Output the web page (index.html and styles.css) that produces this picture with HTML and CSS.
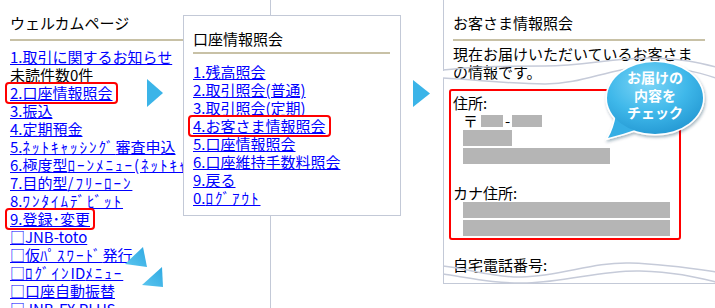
FILE: index.html
```html
<!DOCTYPE html>
<html lang="ja">
<head>
    <meta charset="UTF-8">
    <meta name="viewport" content="width=device-width, initial-scale=1.0">
    <title>お客さま情報照会の手順</title>
    <link rel="stylesheet" href="styles.css">
</head>
<body>
    <div class="stage">
        <div class="panel panel-welcome">
            <div class="panel-title">ウェルカムページ</div>
            <div class="rule"></div>
            <ul class="menu">
                <li><a href="#">1.取引に関するお知らせ</a></li>
                <li>未読件数0件</li>
                <li><a class="mark" href="#">2.口座情報照会</a></li>
                <li><a href="#">3.振込</a></li>
                <li><a href="#">4.定期預金</a></li>
                <li><a href="#">5.<span class="hw">ﾈｯﾄｷｬｯｼﾝｸﾞ</span>審査申込</a></li>
                <li><a href="#">6.極度型<span class="hw">ﾛｰﾝﾒﾆｭｰ(ﾈｯﾄｷｬｯｼﾝｸﾞ)</span></a></li>
                <li><a href="#">7.目的型<span class="hw">/ﾌﾘｰﾛｰﾝ</span></a></li>
                <li><a href="#">8.<span class="hw">ﾜﾝﾀｲﾑﾃﾞﾋﾞｯﾄ</span></a></li>
                <li><a class="mark" href="#">9.登録･変更</a></li>
                <li><a href="#">□JNB-toto</a></li>
                <li><a href="#">□仮<span class="hw">ﾊﾟｽﾜｰﾄﾞ</span>発行</a></li>
                <li><a href="#">□<span class="hw">ﾛｸﾞｲﾝ</span>ID<span class="hw">ﾒﾆｭｰ</span></a></li>
                <li><a href="#">□口座自動振替</a></li>
                <li><a href="#">□JNB-FX PLUS</a></li>
            </ul>
        </div>

        <div class="panel panel-account">
            <div class="panel-title">口座情報照会</div>
            <div class="rule"></div>
            <ul class="menu">
                <li><a href="#">1.残高照会</a></li>
                <li><a href="#">2.取引照会(普通)</a></li>
                <li><a href="#">3.取引照会(定期)</a></li>
                <li><a class="mark" href="#">4.お客さま情報照会</a></li>
                <li><a href="#">5.口座情報照会</a></li>
                <li><a href="#">6.口座維持手数料照会</a></li>
                <li><a href="#">9.戻る</a></li>
                <li><a href="#">0.<span class="hw">ﾛｸﾞｱｳﾄ</span></a></li>
            </ul>
        </div>

        <div class="panel panel-customer">
            <div class="panel-title">お客さま情報照会</div>
            <div class="rule"></div>
            <p class="lead">現在お届けいただいているお客さまの情報です。</p>
            <div class="address-box">
                <div class="label">住所:</div>
                <div class="zip">〒<span class="mask w22"></span><span class="dash">-</span><span class="mask w30"></span></div>
                <div class="mask-bar w49"></div>
                <div class="mask-bar w147"></div>
                <div class="label kana">カナ住所:</div>
                <div class="mask-bar w207"></div>
                <div class="mask-bar w207"></div>
            </div>
            <div class="label phone">自宅電話番号:</div>
        </div>

        <!-- arrows and torn edges drawn over the panels -->
        <svg class="decor" width="715" height="308" viewBox="0 0 715 308">
            <defs>
                <linearGradient id="triFill" x1="0" y1="1" x2="1" y2="0">
                    <stop offset="0" stop-color="#5cc6ef"/>
                    <stop offset="1" stop-color="#2fa9e2"/>
                </linearGradient>
            </defs>
            <polygon points="147,79 163,93 147,107" fill="#3bb4e8"/>
            <polygon points="413,80 430,93.5 413,107" fill="#3bb4e8"/>
            <polygon points="143,247 147,267 125,264" fill="url(#triFill)"/>
            <polygon points="162,267 163,287 142,285" fill="url(#triFill)"/>

            <rect x="442" y="71" width="3" height="7" fill="#fff"/>
            <path class="wave" d="M443,70 C480,66 510,66 545,66 C585,66 610,58 650,58 C680,58 700,63 716,67"/>
            <path class="wave" d="M443,78 C480,80 510,84 545,84 C585,84 610,67 650,67 C680,67 700,73 716,78"/>

            <path class="wave" d="M443,266 C470,269 495,278 522,277 C562,276 592,262 630,263 C665,264 690,268 716,272"/>
            <path class="wave" d="M443,274 C470,278 497,284 527,283 C567,282 602,270 640,271 C675,272 695,277 716,282"/>
        </svg>

        <div class="bubble">
            <svg class="bubble-shape" width="110" height="90" viewBox="0 0 110 90">
                <defs>
                    <radialGradient id="bubbleFill" cx="0.42" cy="0.3" r="0.75">
                        <stop offset="0" stop-color="#7dd5f6"/>
                        <stop offset="0.55" stop-color="#3fb8ea"/>
                        <stop offset="1" stop-color="#2397d2"/>
                    </radialGradient>
                    <filter id="bubbleShadow" x="-20%" y="-20%" width="140%" height="140%">
                        <feDropShadow dx="1" dy="2" stdDeviation="1.5" flood-color="#0a3550" flood-opacity="0.35"/>
                    </filter>
                </defs>
                <g filter="url(#bubbleShadow)">
                    <path d="M16,56 Q14,70 8,80 Q24,76 38,71 Z" fill="#fff" stroke="#fff" stroke-width="3"/>
                    <ellipse cx="55" cy="40" rx="48" ry="36" fill="#fff" stroke="#fff" stroke-width="3"/>
                </g>
                <path d="M16,56 Q14,70 8,80 Q24,76 38,71 Z" fill="#36aee4"/>
                <ellipse cx="55" cy="40" rx="48" ry="36" fill="url(#bubbleFill)"/>
            </svg>
            <div class="bubble-text">お届けの<br>内容を<br>チェック</div>
        </div>
    </div>
</body>
</html>
```

FILE: styles.css
```css
body {
    margin: 0;
    background-color: #fff;
    color: #000;
    font-family: "Noto Sans CJK JP", "Noto Sans", sans-serif;
    font-size: 15px;
}
.stage {
    position: relative;
    width: 715px;
    height: 308px;
    overflow: hidden;
}
.panel {
    position: absolute;
    box-sizing: border-box;
    background-color: #fff;
    border: 1px solid #c3c9d7;
    padding: 14px 10px 0 9px;
    line-height: 18px;
    white-space: nowrap;
}
.panel-welcome {
    left: -1px;
    top: -1px;
    width: 272px;
    height: 330px;
    padding-left: 10px;
}
.panel-account {
    left: 183px;
    top: 15px;
    width: 218px;
    height: 201px;
}
.panel-customer {
    left: 443px;
    top: -1px;
    width: 280px;
    height: 285px;
    padding-right: 17px;
}
.rule {
    height: 2px;
    margin-top: 7px;
    background-color: #c8c1a6;
}
.panel-account .rule {
    margin-top: 4px;
}
.menu {
    list-style: none;
    margin: 7px 0 0;
    padding: 0;
}
.panel-account .menu {
    margin-top: 9px;
}
.menu a {
    color: #0000ff;
    text-decoration: underline;
}
.menu a.mark {
    display: inline-block;
    padding: 0 3px;
    margin: 0 -3px;
    outline: 2px solid #ff0000;
    border-radius: 2px;
}
.hw {
    letter-spacing: 2px;
}
.lead {
    margin: 4px 0 0;
    white-space: normal;
}
.address-box {
    box-sizing: border-box;
    width: 232px;
    margin: 8px 0 0 -4px;
    padding: 3px 0 2px 2px;
    border: 2px solid #ff0000;
    border-radius: 3px;
}
.zip {
    display: flex;
    align-items: center;
    height: 18px;
    padding-left: 10px;
}
.mask {
    display: inline-block;
    height: 12px;
    background-color: #b5b5b5;
}
.zip .w22 {
    width: 22px;
    margin-left: 3px;
}
.zip .w30 {
    width: 30px;
}
.dash {
    padding: 0 2px;
}
.mask-bar {
    height: 16px;
    margin: 2px 0 0 10px;
    background-color: #b5b5b5;
}
.zip + .mask-bar,
.kana + .mask-bar {
    margin-top: 0;
}
.w49 { width: 49px; }
.w147 { width: 147px; }
.w207 { width: 207px; }
.label.kana {
    margin-top: 20px;
}
.label.phone {
    margin-top: 16px;
}
.decor {
    position: absolute;
    left: 0;
    top: 0;
    pointer-events: none;
}
.wave {
    fill: none;
    stroke: #c6cbd9;
    stroke-width: 1.5;
}
.bubble {
    position: absolute;
    left: 600px;
    top: 58px;
    width: 110px;
    height: 90px;
}
.bubble-shape {
    position: absolute;
    left: 0;
    top: 0;
}
.bubble-text {
    position: relative;
    padding-top: 11px;
    color: #fff;
    font-size: 14px;
    font-weight: bold;
    line-height: 17.5px;
    text-align: center;
}
```
